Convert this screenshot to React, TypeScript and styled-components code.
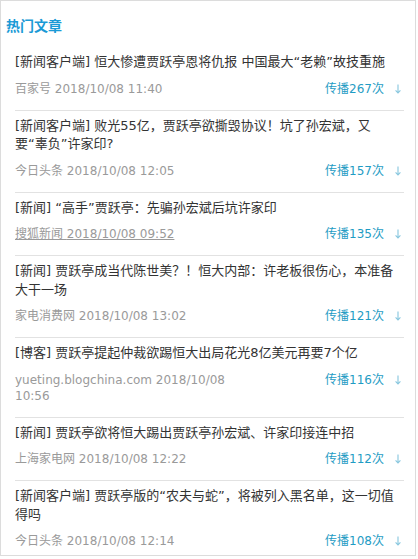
import React from 'react';
import styled, { createGlobalStyle } from 'styled-components';

const GlobalStyle = createGlobalStyle`
  body {
    margin: 0;
    background: #fff;
    font-family: "DejaVu Sans", "Noto Sans CJK SC", sans-serif;
  }
`;

const Panel = styled.section`
  box-sizing: border-box;
  width: 416px;
  height: 556px;
  border: 1px solid #dcdcdc;
  background: #fff;
  overflow: hidden;
`;

const Heading = styled.h2`
  margin: 0;
  padding: 13px 5px 11px;
  font-size: 14px;
  line-height: 22px;
  font-weight: bold;
  color: #1b9ad6;
  font-family: "Noto Sans CJK SC", sans-serif;
`;

const List = styled.ul`
  list-style: none;
  margin: 0;
  padding: 0 11px 0 14px;
`;

const Item = styled.li`
  padding: 6px 0 13px;
  border-top: 1px solid #e2e2e2;

  &:first-child {
    border-top: none;
    padding-top: 6px;
  }
`;

const Title = styled.a`
  display: block;
  padding-right: 4px;
  font-size: 13px;
  line-height: 18.5px;
  color: #333;
  text-decoration: none;
`;

const Keep = styled.span`
  white-space: nowrap;
`;

const Meta = styled.div`
  display: flex;
  justify-content: space-between;
  align-items: flex-start;
  margin-top: 9px;
  font-size: 12px;
  line-height: 16px;
`;

const Source = styled.span<{ $underline?: boolean }>`
  max-width: 240px;
  color: #9a9a9a;
  text-decoration: ${(p) => (p.$underline ? 'underline' : 'none')};
`;

const Spread = styled.span`
  display: flex;
  align-items: center;
  gap: 11px;
  color: #1f9cc4;
  white-space: nowrap;
`;

const ArrowIcon = styled.svg`
  width: 6px;
  height: 10px;
  margin-right: 3px;
`;

type Article = {
  title: React.ReactNode;
  source: string;
  time: string;
  count: number;
  underline?: boolean;
};

const articles: Article[] = [
  { title: '[新闻客户端] 恒大惨遭贾跃亭恩将仇报 中国最大“老赖”故技重施', source: '百家号', time: '2018/10/08 11:40', count: 267 },
  {
    title: (
      <>
        [新闻客户端] 败光55亿，贾跃亭欲撕毁协议！坑了孙宏斌，又<Keep>要“辜</Keep>负”许家印?
      </>
    ),
    source: '今日头条',
    time: '2018/10/08 12:05',
    count: 157,
  },
  { title: '[新闻] “高手”贾跃亭：先骗孙宏斌后坑许家印', source: '搜狐新闻', time: '2018/10/08 09:52', count: 135, underline: true },
  { title: '[新闻] 贾跃亭成当代陈世美？！恒大内部：许老板很伤心，本准备大干一场', source: '家电消费网', time: '2018/10/08 13:02', count: 121 },
  { title: '[博客] 贾跃亭提起仲裁欲踢恒大出局花光8亿美元再要7个亿', source: 'yueting.blogchina.com', time: '2018/10/08 10:56', count: 116 },
  { title: '[新闻] 贾跃亭欲将恒大踢出贾跃亭孙宏斌、许家印接连中招', source: '上海家电网', time: '2018/10/08 12:22', count: 112 },
  { title: '[新闻客户端] 贾跃亭版的“农夫与蛇”，将被列入黑名单，这一切值得吗', source: '今日头条', time: '2018/10/08 12:14', count: 108 },
];

function Arrow() {
  return (
    <ArrowIcon viewBox="0 0 6 10">
      <path d="M3 0.5V9M0.6 6.4L3 9l2.4-2.6" fill="none" stroke="#86c6de" strokeWidth="1.1" />
    </ArrowIcon>
  );
}

export default function App() {
  return (
    <>
      <GlobalStyle />
      <Panel>
        <Heading>热门文章</Heading>
        <List>
          {articles.map((a) => (
            <Item key={a.count}>
              <Title href="#">{a.title}</Title>
              <Meta>
                <Source $underline={a.underline}>
                  {a.source} {a.time}
                </Source>
                <Spread>
                  传播{a.count}次
                  <Arrow />
                </Spread>
              </Meta>
            </Item>
          ))}
        </List>
      </Panel>
    </>
  );
}
